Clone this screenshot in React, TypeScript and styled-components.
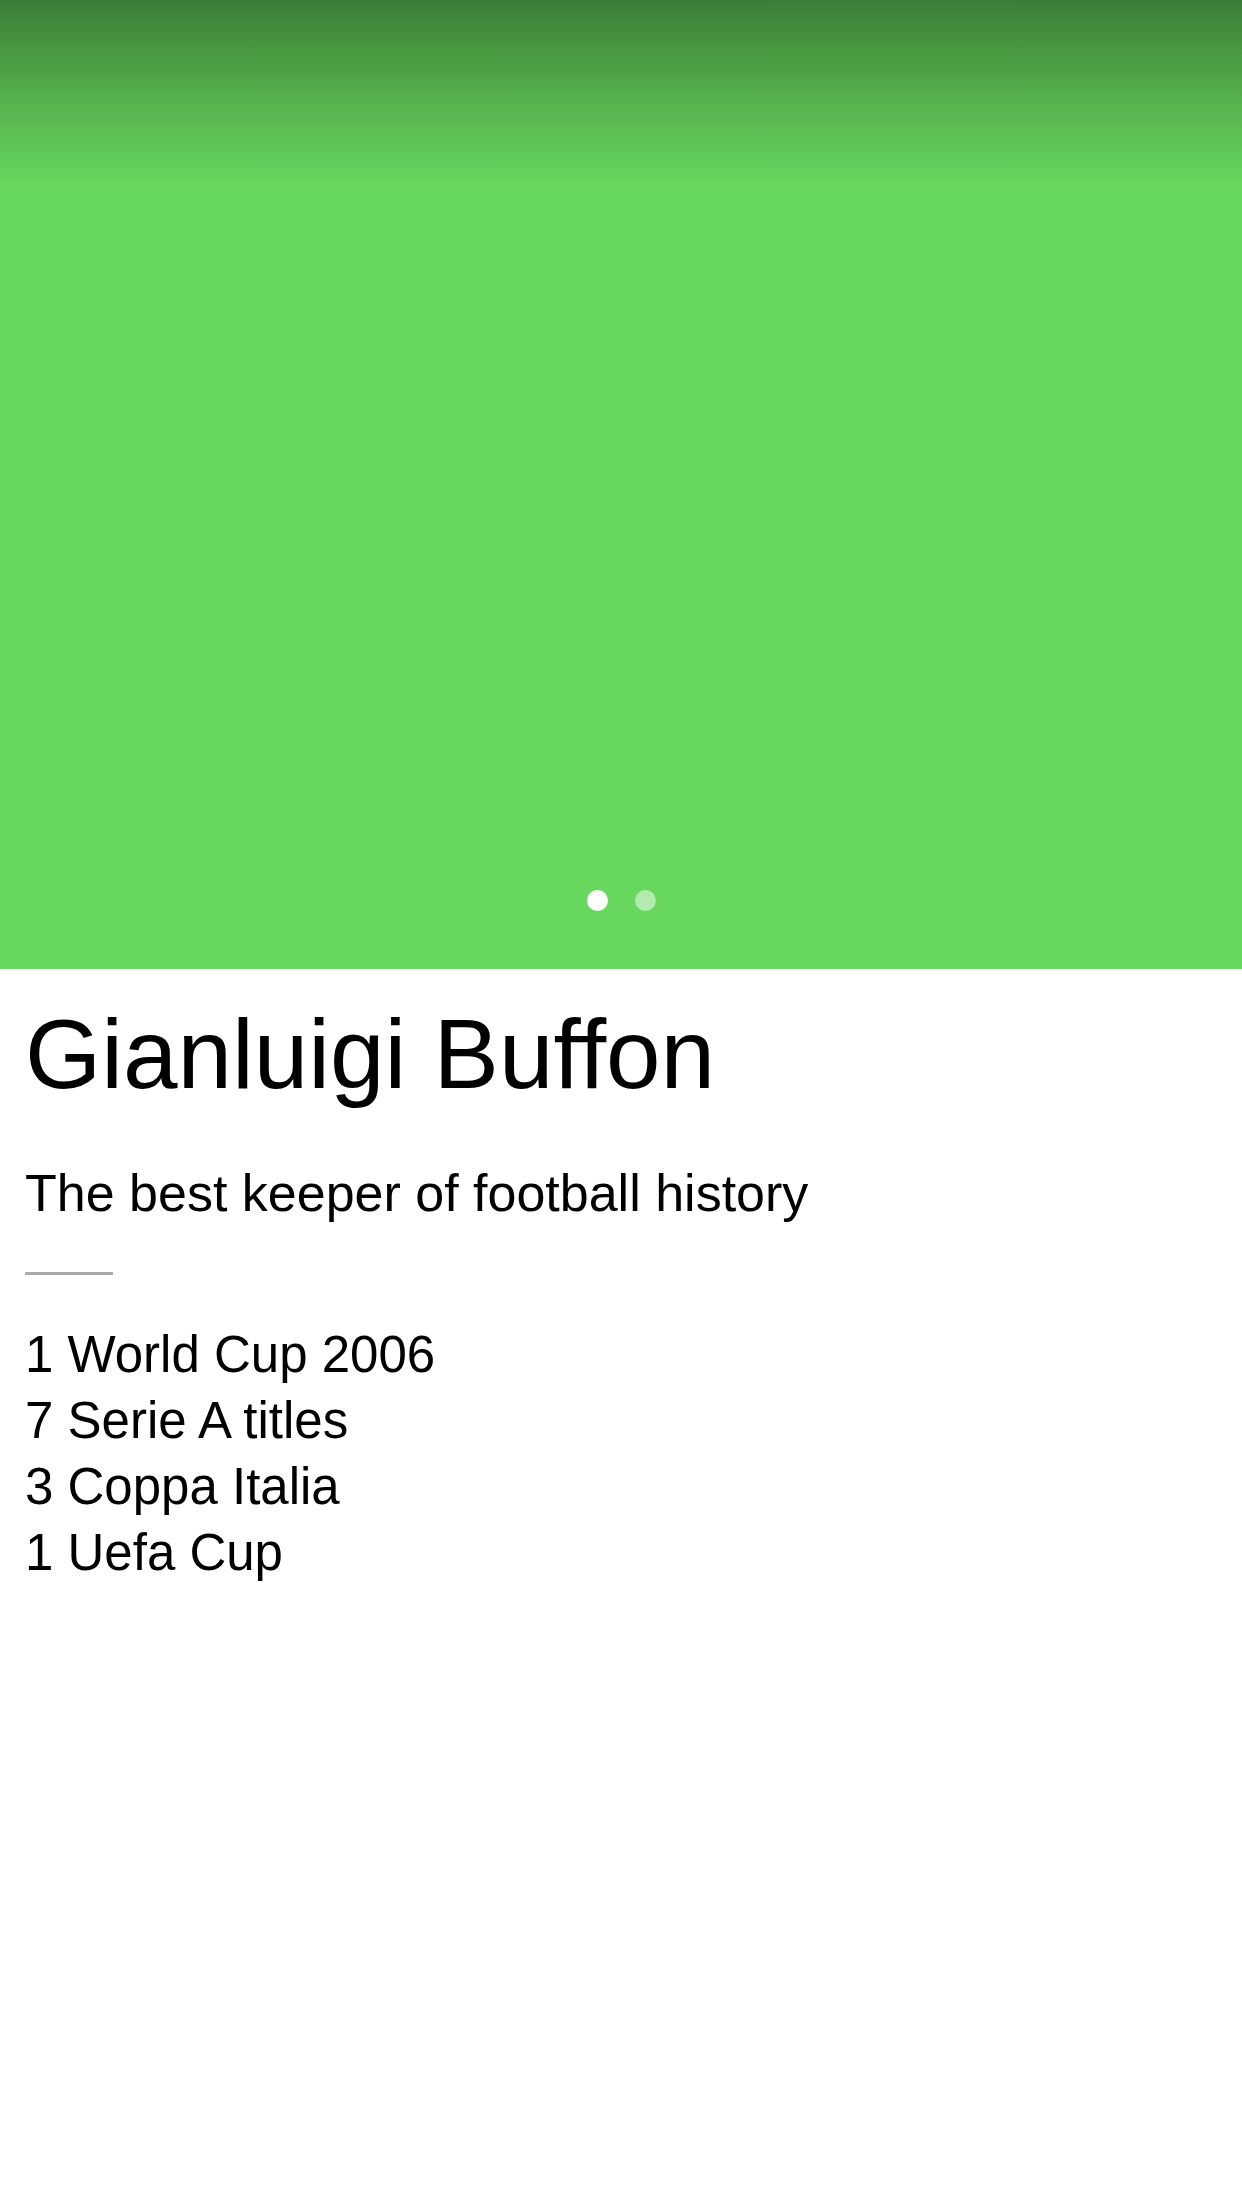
import React from 'react';
import styled, { createGlobalStyle } from 'styled-components';

const GlobalStyle = createGlobalStyle`
  html, body {
    margin: 0;
    padding: 0;
    background: #ffffff;
  }
  body {
    font-family: "Liberation Sans", Arial, sans-serif;
    font-variant-ligatures: none;
    color: #000;
  }
`;

const Page = styled.div`
  width: 1242px;
  min-height: 2208px;
  background: #fff;
`;

const Hero = styled.div`
  height: 969px;
  background-color: #67d75d;
  background-image: linear-gradient(
    to bottom,
    rgba(0, 0, 0, 0.42) 0px,
    rgba(0, 0, 0, 0.2) 90px,
    rgba(0, 0, 0, 0) 186px
  );
  display: flex;
  flex-direction: column;
  justify-content: flex-end;
  align-items: center;
  padding-bottom: 58px;
  box-sizing: border-box;
`;

const Dots = styled.div`
  display: flex;
  gap: 27px;
`;

const Dot = styled.span<{ active?: boolean }>`
  width: 21px;
  height: 21px;
  border-radius: 50%;
  background: ${(p) => (p.active ? '#ffffff' : 'rgba(255, 255, 255, 0.5)')};
`;

const Content = styled.div`
  padding: 26px 25px 0;
`;

const Title = styled.h1`
  margin: 0;
  font-size: 98px;
  line-height: 118px;
  font-weight: 400;
`;

const Subtitle = styled.p`
  margin: 47px 0 0;
  font-size: 52px;
  line-height: 66px;
`;

const Divider = styled.div`
  margin-top: 46px;
  width: 88px;
  height: 3px;
  background: #a9a9a9;
`;

const Trophies = styled.ul`
  list-style: none;
  margin: 47px 0 0;
  padding: 0;
`;

const Trophy = styled.li`
  font-size: 51px;
  line-height: 66px;
`;

const trophies = ['1 World Cup 2006', '7 Serie A titles', '3 Coppa Italia', '1 Uefa Cup'];

const App: React.FC = () => {
  return (
    <Page>
      <GlobalStyle />
      <Hero>
        <Dots>
          <Dot active />
          <Dot />
        </Dots>
      </Hero>
      <Content>
        <Title>Gianluigi Buffon</Title>
        <Subtitle>The best keeper of football history</Subtitle>
        <Divider />
        <Trophies>
          {trophies.map((t) => (
            <Trophy key={t}>{t}</Trophy>
          ))}
        </Trophies>
      </Content>
    </Page>
  );
};

export default App;
